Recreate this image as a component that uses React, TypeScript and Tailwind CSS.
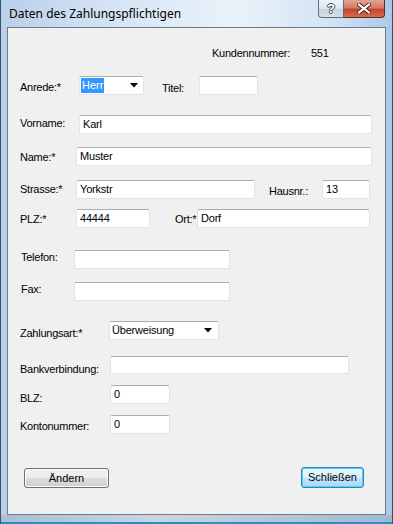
import React from "react";

const font = { fontFamily: '"Liberation Sans", Arial, sans-serif' };

function TextBox({ w, h = 19, value, className = "" }: { w: number; h?: number; value?: string; className?: string }) {
  return (
    <div
      className={`shrink-0 bg-white border border-[#e2e3ea] border-t-[#abadb3] rounded-[2px] pl-[3px] flex items-center text-[11px] tracking-[-0.2px] text-black ${className}`}
      style={{ width: w, height: h }}
    >
      {value}
    </div>
  );
}

function Arrow() {
  return (
    <svg width="8" height="5" viewBox="0 0 8 5" className="shrink-0">
      <path d="M0 0h8L4 4.5z" fill="#000" />
    </svg>
  );
}

function Label({ w, top, children, className = "" }: { w: number; top: number; children: React.ReactNode; className?: string }) {
  return (
    <div
      className={`shrink-0 text-[11px] leading-[13px] tracking-[-0.25px] text-black whitespace-nowrap ${className}`}
      style={{ width: w, marginTop: top }}
    >
      {children}
    </div>
  );
}

export default function App() {
  return (
    <div
      className="w-[393px] h-[524px] overflow-hidden flex flex-col bg-[linear-gradient(90deg,#b9d0e9_0%,#d6e5f4_30%,#eaf2fa_60%,#d3e3f3_85%,#a9c8e8_100%)] border-l border-r border-[#3d4f63]"
      style={font}
    >
      {/* Title bar */}
      <div className="h-[27px] flex items-start shrink-0">
        <div
          className="pl-[8px] pt-[6px] text-[12px] leading-[16px] text-black flex-1"
          style={{ fontFamily: '"Noto Sans", "Open Sans", sans-serif' }}
        >
          Daten des Zahlungspflichtigen
        </div>
        <div className="flex mr-[7px]">
          <div className="w-[26px] h-[18px] border border-[#5d6d80] border-t-0 rounded-bl-[4px] bg-[linear-gradient(180deg,#eef3f8_0%,#dde6ef_50%,#c5d2df_51%,#d7e1ea_100%)] flex items-center justify-center text-[13px] leading-[13px] font-bold text-white [text-shadow:1px_0_0_#3b4b5c,-1px_0_0_#3b4b5c,0_1px_0_#3b4b5c,0_-1px_0_#3b4b5c]">
            ?
          </div>
          <div className="w-[41px] h-[18px] border border-[#5d2a24] border-t-0 border-l-0 rounded-br-[4px] bg-[linear-gradient(180deg,#e2a293_0%,#d47b68_45%,#c4452f_55%,#d8694f_100%)] flex items-center justify-center">
            <svg width="14" height="11" viewBox="0 0 14 11">
              <path d="M2 1.5L12 9.5M12 1.5L2 9.5" stroke="#4b1d16" strokeWidth="4" strokeLinecap="square" />
              <path d="M2 1.5L12 9.5M12 1.5L2 9.5" stroke="#fff" strokeWidth="2.2" strokeLinecap="square" />
            </svg>
          </div>
        </div>
      </div>

      <div className="flex shrink-0">
        <div className="w-[6px]" />
        {/* Client area */}
        <div className="w-[379px] h-[488px] bg-[#f0f0f0] border border-[#6b7b8d] flex flex-col pl-[12px]">
          {/* Kundennummer */}
          <div className="flex mt-[19px] h-[13px]">
            <Label w={99} top={0} className="ml-[192px]">Kundennummer:</Label>
            <Label w={40} top={0}>551</Label>
          </div>

          {/* Anrede / Titel */}
          <div className="flex items-start mt-[16px] h-[19px]">
            <Label w={59} top={5}>Anrede:*</Label>
            <div className="shrink-0 w-[65px] h-[19px] bg-white border border-[#e2e3ea] border-t-[#abadb3] rounded-[2px] flex items-center pl-px pr-[5px]">
              <span className="bg-[#3399ff] text-white text-[11px] leading-[15px] px-px">Herr</span>
              <div className="flex-1" />
              <Arrow />
            </div>
            <Label w={37} top={6} className="ml-[18px]">Titel:</Label>
            <TextBox w={59} />
          </div>

          {/* Vorname */}
          <div className="flex items-start mt-[20px] h-[19px]">
            <Label w={59} top={2}>Vorname:</Label>
            <TextBox w={293} value="Karl" />
          </div>

          {/* Name */}
          <div className="flex items-start mt-[13px] h-[19px]">
            <Label w={56} top={4}>Name:*</Label>
            <TextBox w={296} value="Muster" />
          </div>

          {/* Strasse / Hausnr */}
          <div className="flex items-start mt-[14px] h-[19px]">
            <Label w={56} top={3}>Strasse:*</Label>
            <TextBox w={179} value="Yorkstr" />
            <Label w={53} top={5} className="ml-[14px]">Hausnr.:</Label>
            <TextBox w={48} value="13" />
          </div>

          {/* PLZ / Ort */}
          <div className="flex items-start mt-[10px] h-[19px]">
            <Label w={56} top={4}>PLZ:*</Label>
            <TextBox w={74} value="44444" />
            <Label w={22} top={4} className="ml-[25px]">Ort:*</Label>
            <TextBox w={173} value="Dorf" />
          </div>

          {/* Telefon */}
          <div className="flex items-start mt-[22px] h-[19px]">
            <Label w={53} top={1} className="ml-px">Telefon:</Label>
            <TextBox w={156} />
          </div>

          {/* Fax */}
          <div className="flex items-start mt-[13px] h-[19px]">
            <Label w={53} top={1} className="ml-px">Fax:</Label>
            <TextBox w={156} />
          </div>

          {/* Zahlungsart */}
          <div className="flex items-start mt-[20px] h-[19px]">
            <Label w={89} top={6}>Zahlungsart:*</Label>
            <div className="shrink-0 w-[110px] h-[19px] bg-white border border-[#e2e3ea] border-t-[#abadb3] rounded-[2px] flex items-center pl-[2px] pr-[6px]">
              <span className="text-[11px] leading-[13px] tracking-[-0.2px] text-black">Überweisung</span>
              <div className="flex-1" />
              <Arrow />
            </div>
          </div>

          {/* Bankverbindung */}
          <div className="flex items-start mt-[16px] h-[18px]">
            <Label w={90} top={7}>Bankverbindung:</Label>
            <TextBox w={239} h={18} />
          </div>

          {/* BLZ */}
          <div className="flex items-start mt-[11px] h-[19px]">
            <Label w={90} top={7}>BLZ:</Label>
            <TextBox w={60} value="0" />
          </div>

          {/* Kontonummer */}
          <div className="flex items-start mt-[11px] h-[19px]">
            <Label w={90} top={5}>Kontonummer:</Label>
            <TextBox w={60} value="0" />
          </div>

          {/* Buttons */}
          <div className="flex items-start mt-[33px]">
            <div className="ml-[4px] mt-px w-[85px] h-[20px] rounded-[3px] border border-[#707070] bg-[linear-gradient(180deg,#f2f2f2_0%,#ebebeb_50%,#dddddd_51%,#cfcfcf_100%)] shadow-[inset_0_0_0_1px_#fcfcfc] flex items-center justify-center text-[11px] text-black">
              Ändern
            </div>
            <div className="ml-[192px] w-[63px] h-[21px] rounded-[3px] border border-[#3c7fb1] bg-[linear-gradient(180deg,#eaf6fd_0%,#d9f0fc_50%,#bee6fd_51%,#a7d9f5_100%)] shadow-[inset_0_0_0_1px_#48d2ff] flex items-center justify-center text-[11px] text-black">
              Schließen
            </div>
          </div>
        </div>
        <div className="w-[6px]" />
      </div>
      <div className="flex-1 bg-[linear-gradient(90deg,#a8bfd6_0%,#c9d6e2_40%,#b9c7d4_70%,#9fbad6_100%)] border-b-2 border-[#2a8fc4]" />
    </div>
  );
}
